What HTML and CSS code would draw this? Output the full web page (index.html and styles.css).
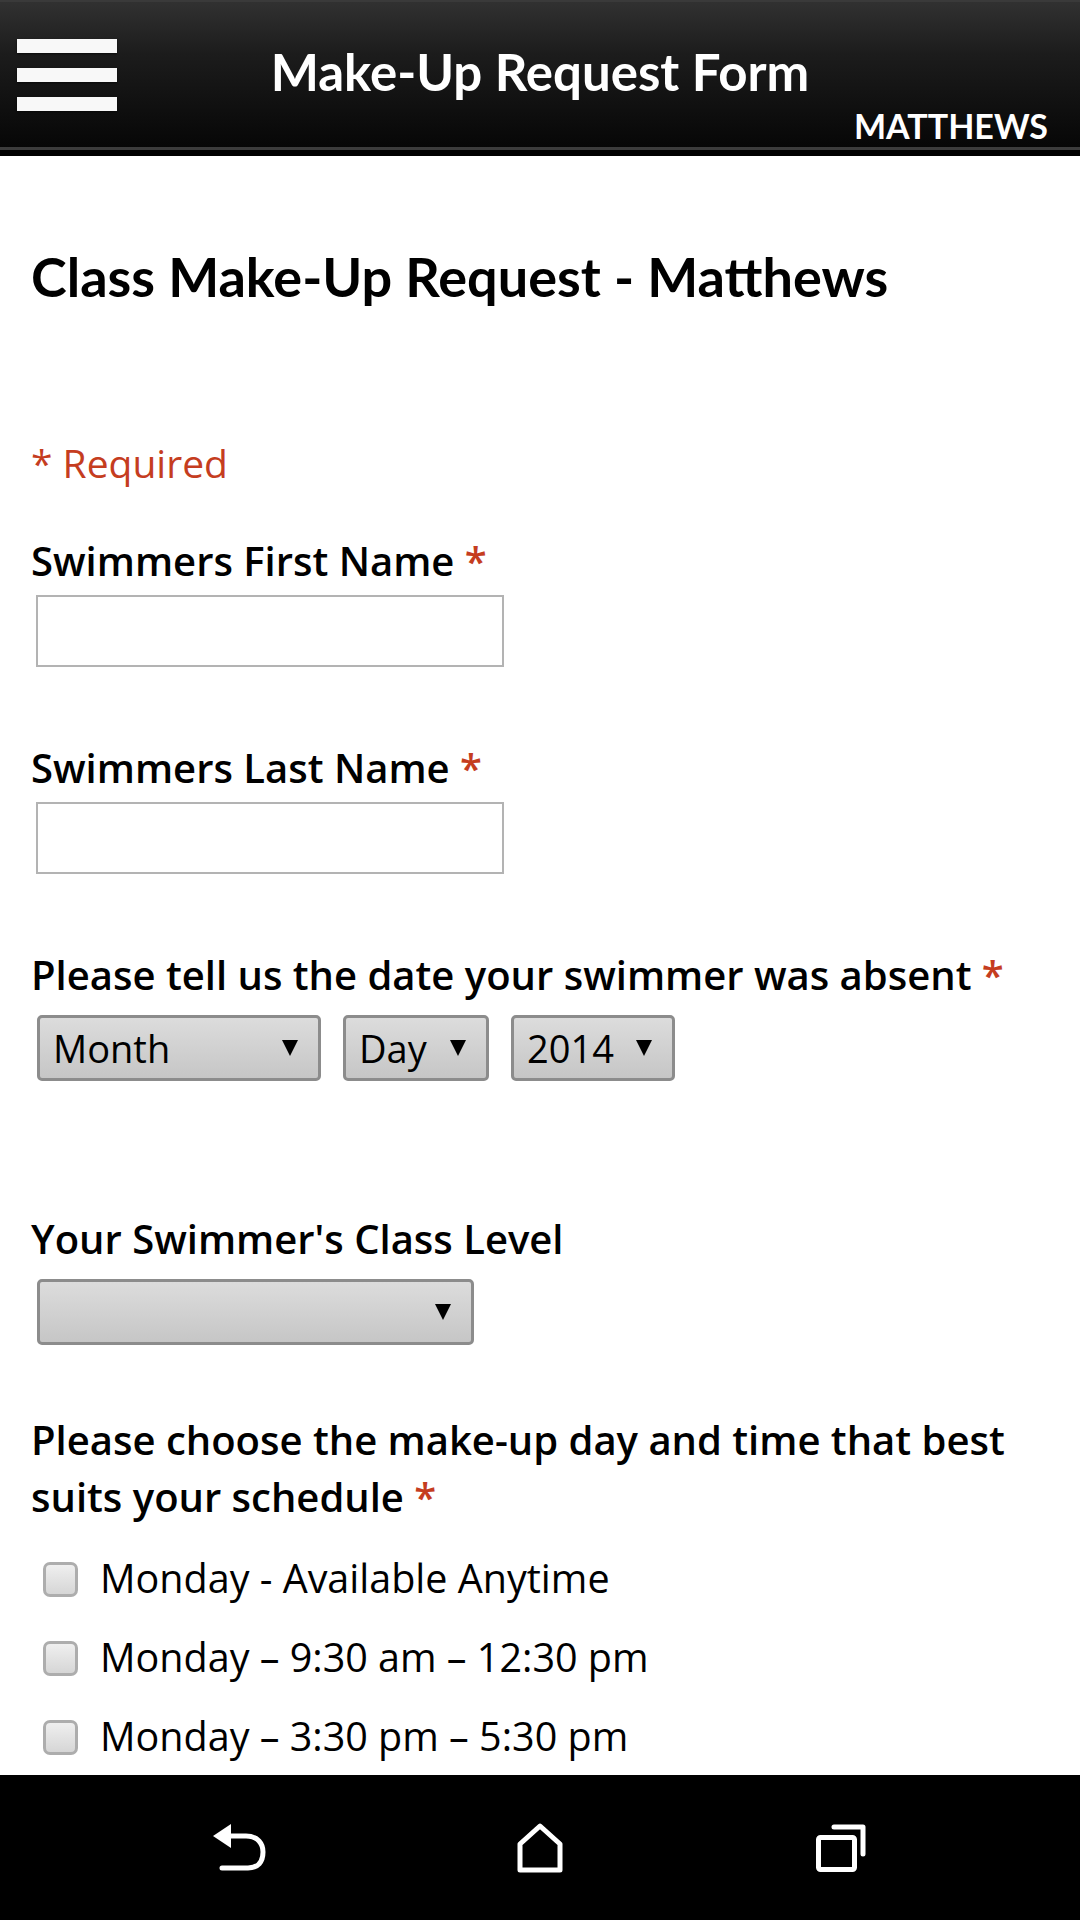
FILE: index.html
```html
<!DOCTYPE html>
<html lang="en">
<head>
<meta charset="utf-8">
<title>Make-Up Request Form</title>
<link rel="stylesheet" href="styles.css">
</head>
<body>
<div class="screen">
  <header class="topbar">
    <div class="hamburger" aria-label="Menu"><span></span><span></span><span></span></div>
    <div class="topbar-title">Make-Up Request Form</div>
    <div class="topbar-sub">MATTHEWS</div>
  </header>

  <main class="content">
    <h1 class="form-title">Class Make-Up Request - Matthews</h1>
    <div class="required-note">* Required</div>

    <div class="label label-first">Swimmers First Name <span class="req">*</span></div>
    <input class="text-input" type="text">

    <div class="label label-gap">Swimmers Last Name <span class="req">*</span></div>
    <input class="text-input" type="text">

    <div class="label label-gap">Please tell us the date your swimmer was absent <span class="req">*</span></div>
    <div class="select-row">
      <div class="select select-month"><span>Month</span><span class="arrow"></span></div>
      <div class="select select-day"><span>Day</span><span class="arrow"></span></div>
      <div class="select select-year"><span>2014</span><span class="arrow"></span></div>
    </div>

    <div class="label label-level">Your Swimmer's Class Level</div>
    <div class="select-row">
      <div class="select select-level"><span></span><span class="arrow"></span></div>
    </div>

    <div class="label label-multi"><span>Please choose the make-up day and time that best</span><br><span>suits your schedule</span> <span class="req">*</span></div>
    <ul class="options">
      <li class="option"><input class="check" type="checkbox"><span>Monday - Available Anytime</span></li>
      <li class="option"><input class="check" type="checkbox"><span>Monday – 9:30 am – 12:30 pm</span></li>
      <li class="option"><input class="check" type="checkbox"><span>Monday – 3:30 pm – 5:30 pm</span></li>
    </ul>
  </main>

  <nav class="navbar">
    <div class="nav-cell">
      <svg width="60" height="56" viewBox="0 0 60 56" fill="none">
        <polygon points="3,16 21,4 21,28" fill="#fff"/>
        <path d="M19 16 H36 C48 16 53 24 53 32 C53 42 48 48 38 48 H12" stroke="#fff" stroke-width="5" stroke-linecap="round"/>
      </svg>
    </div>
    <div class="nav-cell">
      <svg width="50" height="52" viewBox="0 0 50 52" fill="none">
        <path d="M25 4 L5 22 V48 H45 V22 Z" stroke="#fff" stroke-width="5" stroke-linejoin="round"/>
      </svg>
    </div>
    <div class="nav-cell">
      <svg width="56" height="52" viewBox="0 0 56 52" fill="none">
        <rect x="6.5" y="15.5" width="36" height="32" rx="2" stroke="#fff" stroke-width="5"/>
        <path d="M22 5 H51 V32" stroke="#fff" stroke-width="5" stroke-linecap="round" stroke-linejoin="round"/>
      </svg>
    </div>
  </nav>
</div>
</body>
</html>
```

FILE: styles.css
```css
* { box-sizing: border-box; }

html, body {
  margin: 0;
  padding: 0;
  background: #fff;
}

body {
  font-family: "Open Sans", "Lato", "Liberation Sans", sans-serif;
  color: #000;
}

.screen {
  width: 1080px;
  height: 1920px;
  display: flex;
  flex-direction: column;
  overflow: hidden;
}

/* ---------- top bar ---------- */
.topbar {
  flex: 0 0 156px;
  display: grid;
  grid-template-columns: 1fr auto 1fr;
  background: linear-gradient(#313131 0%, #1c1c1c 35%, #060606 100%);
  border-top: 2px solid #3a3a3a;
  border-bottom: 6px solid #000;
  box-shadow: inset 0 -3px 0 #3c3c3c;
  color: #fff;
  font-family: "Lato", "Open Sans", sans-serif;
}

.hamburger {
  justify-self: start;
  margin: 37px 0 0 17px;
  display: flex;
  flex-direction: column;
  gap: 15px;
}

.hamburger span {
  display: block;
  width: 100px;
  height: 14px;
  background: #f8f8f8;
  box-shadow: 0 1px 2px rgba(0,0,0,0.6);
}

.topbar-title {
  margin-top: 40px;
  font-size: 51px;
  line-height: 60px;
  font-weight: 700;
  white-space: nowrap;
}

.topbar-sub {
  align-self: end;
  justify-self: end;
  padding: 0 32px 4px 0;
  font-size: 34px;
  line-height: 40px;
  font-weight: 700;
}

/* ---------- content ---------- */
.content {
  flex: 1 1 auto;
  overflow: hidden;
  padding: 0 0 0 31px;
}

.form-title {
  margin: 88px 0 0;
  font-family: "Lato", "Open Sans", sans-serif;
  font-size: 54px;
  line-height: 65px;
  font-weight: 700;
}

.required-note {
  margin-top: 131px;
  font-size: 39px;
  line-height: 46px;
  color: #c53d1f;
}

.label {
  font-size: 40px;
  line-height: 47px;
  font-weight: 600;
}

.req { color: #c53d1f; }

.label-first { margin-top: 51px; }
.label-gap { margin-top: 77px; }
.label-level { margin-top: 134px; }
.label-multi {
  margin-top: 66px;
  line-height: 57px;
  padding-right: 30px;
}

.text-input {
  display: block;
  margin: 11px 0 0 5px;
  width: 468px;
  height: 72px;
  border: 2px solid #b3b3b3;
  background: #fff;
  font: inherit;
}

.select-row {
  display: flex;
  gap: 22px;
  margin: 17px 0 0 6px;
}

.select {
  height: 66px;
  display: flex;
  align-items: center;
  padding: 0 20px 0 13px;
  border: 3px solid #8c8c8c;
  border-radius: 5px;
  background: linear-gradient(#dcdcdc, #c6c6c6);
  font-size: 38px;
  font-weight: 400;
}

.select .arrow {
  margin-left: auto;
  width: 0;
  height: 0;
  border-left: 8px solid transparent;
  border-right: 8px solid transparent;
  border-top: 16px solid #000;
}

.select-month { width: 284px; }
.select-day { width: 146px; }
.select-year { width: 164px; }
.select-level { width: 437px; }

.options {
  list-style: none;
  margin: 14px 0 0;
  padding: 0;
}

.option {
  height: 79px;
  display: flex;
  align-items: center;
  font-size: 39.5px;
  line-height: 79px;
}

.check {
  appearance: none;
  -webkit-appearance: none;
  margin: 2px 22px 0 12px;
  width: 35px;
  height: 35px;
  border: 3px solid #adadad;
  border-radius: 7px;
  background: linear-gradient(#efefef, #d6d6d6);
}

/* ---------- system nav ---------- */
.navbar {
  flex: 0 0 145px;
  background: #000;
  display: flex;
  justify-content: center;
  align-items: center;
}

.nav-cell {
  width: 300px;
  display: flex;
  justify-content: center;
  align-items: center;
}
```
